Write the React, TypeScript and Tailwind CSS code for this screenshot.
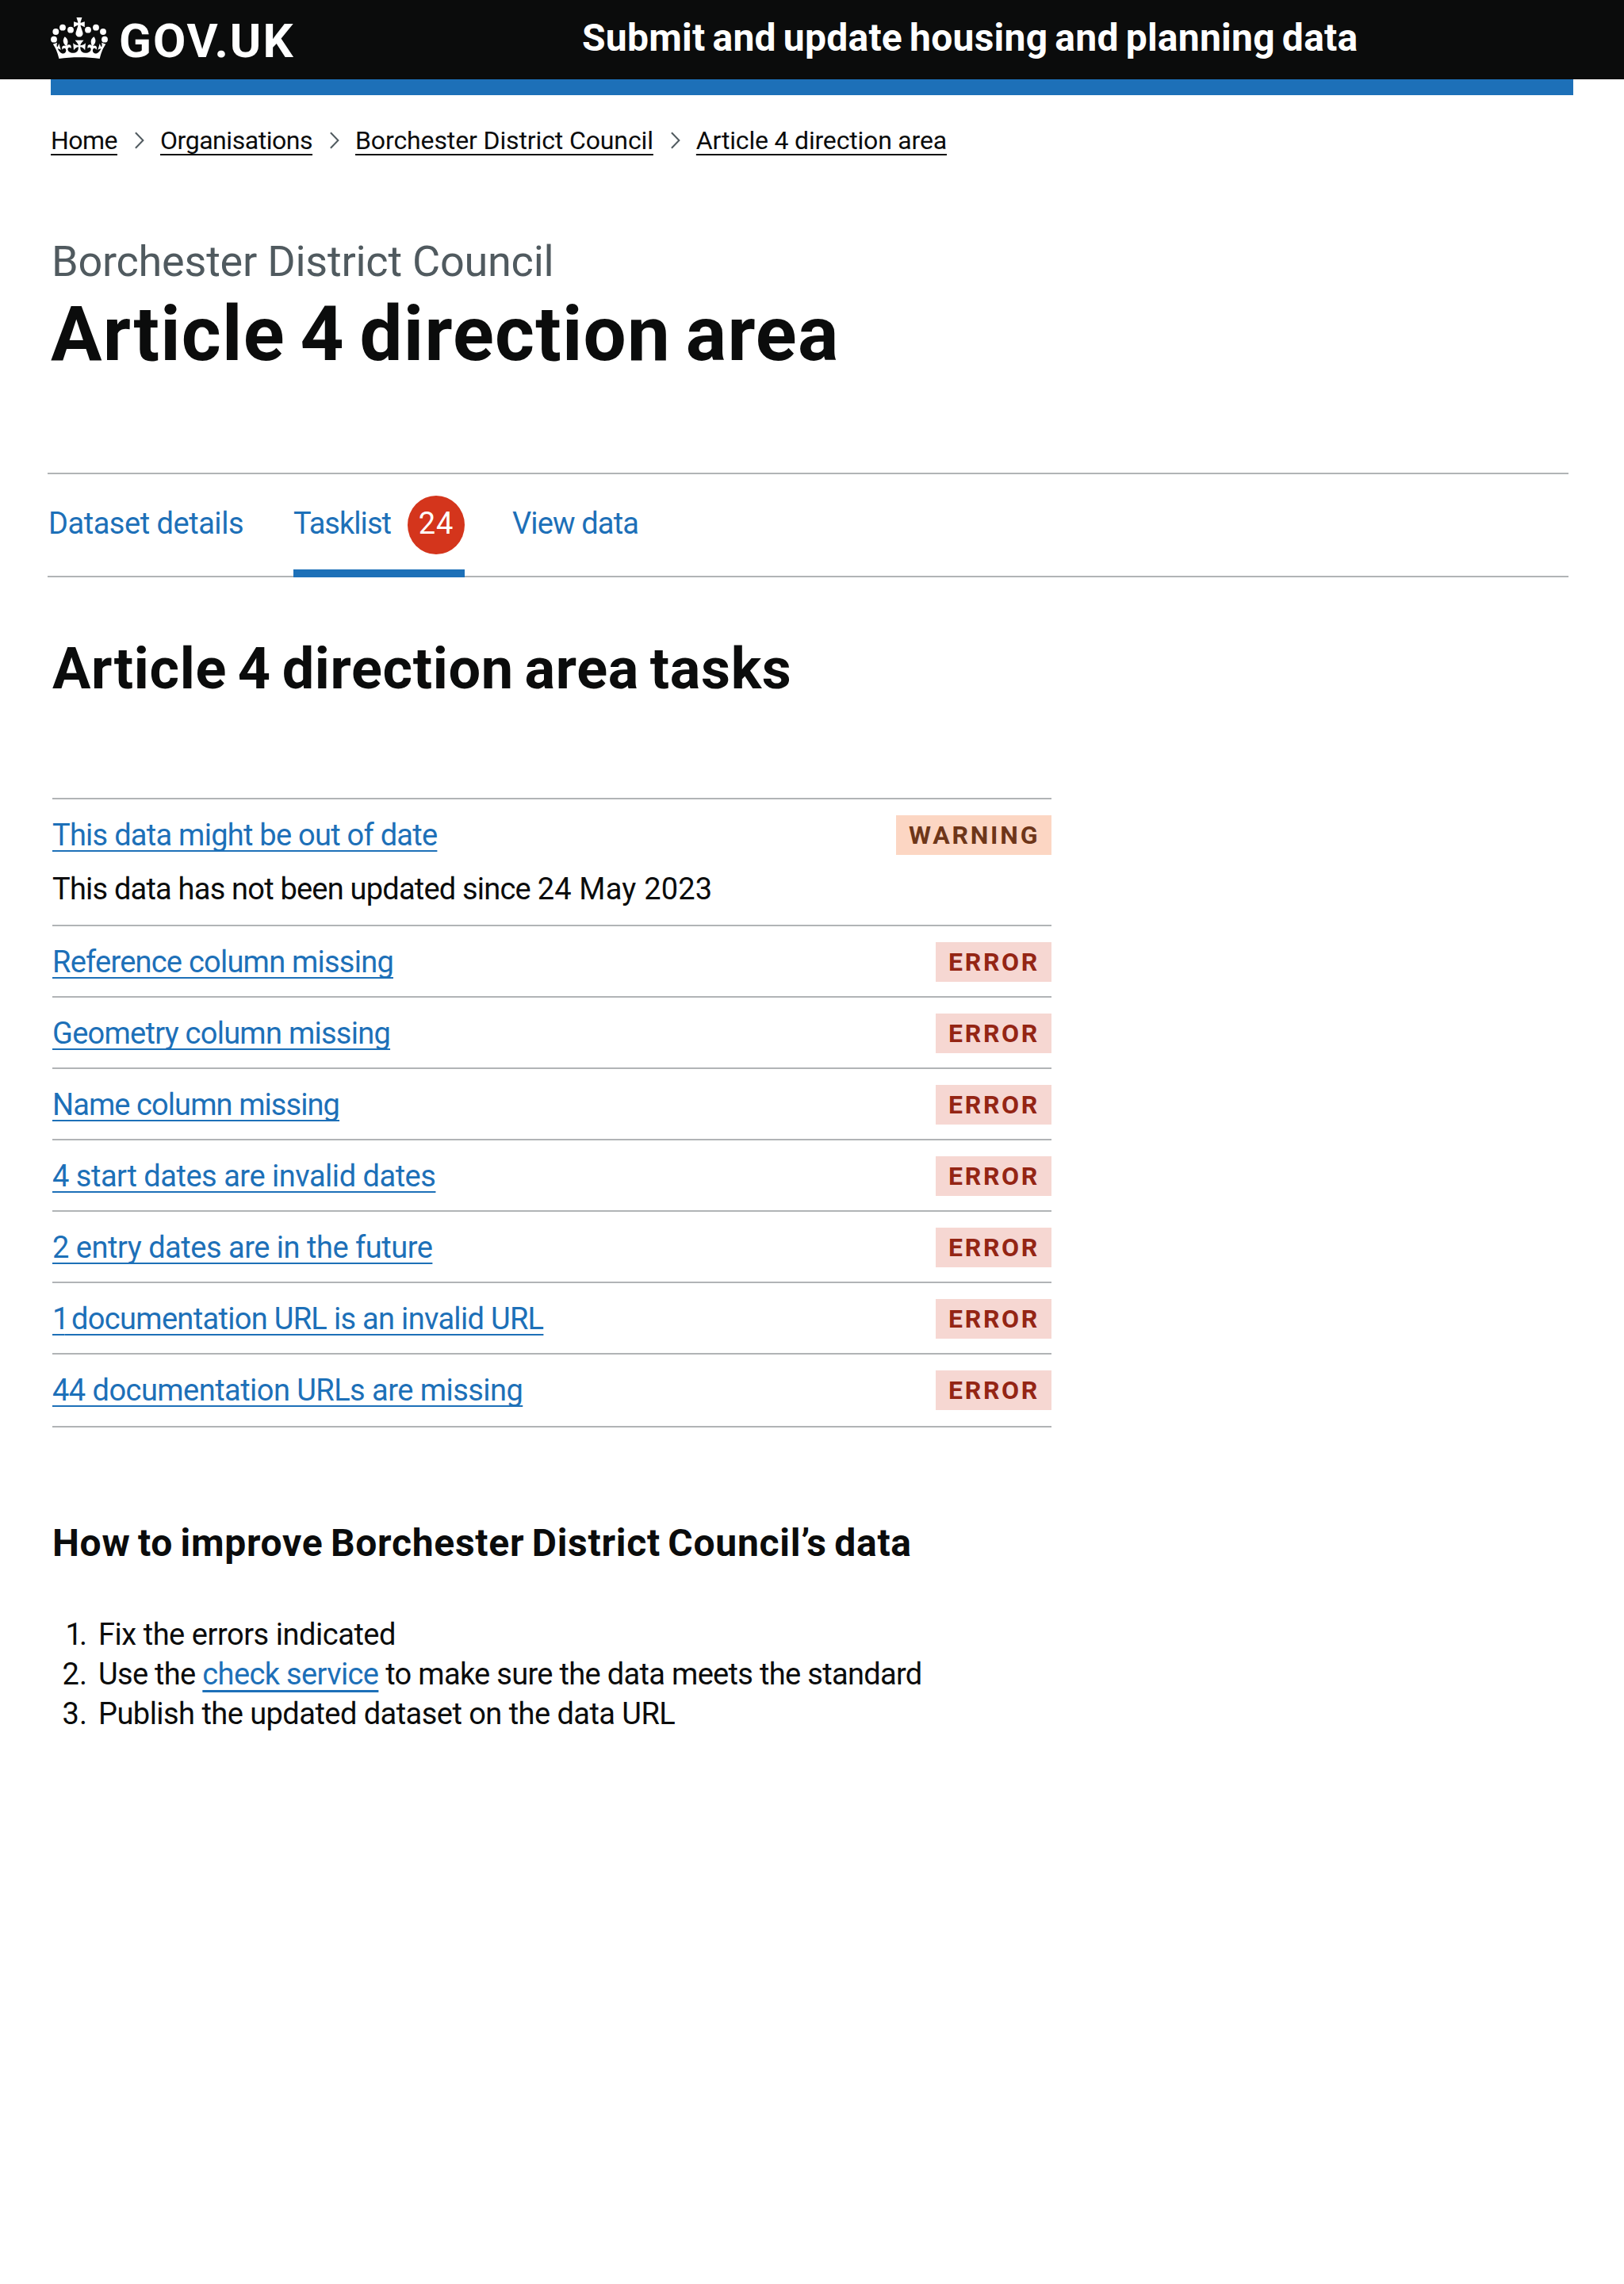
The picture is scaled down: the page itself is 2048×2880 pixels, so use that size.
import React from 'react';

const LINK = 'text-[#1d70b8] underline decoration-2 underline-offset-[6px] [text-decoration-skip-ink:none]';

function Crown() {
  return (
    <svg viewBox="72 66 216 156" className="h-[52px] w-[72px]" fill="currentColor" aria-hidden="true">
      <circle cx="84" cy="149" r="11.8" />
      <circle cx="91" cy="120" r="11.8" />
      <circle cx="117" cy="104" r="11.8" />
      <circle cx="147" cy="113" r="11.8" />
      <circle cx="213" cy="113" r="11.8" />
      <circle cx="243" cy="104" r="11.8" />
      <circle cx="270" cy="120" r="11.8" />
      <circle cx="276" cy="149" r="11.8" />
      <path
        transform="translate(80.4 66) scale(3.14)"
        d="M33.1,9.8c.2-.1.3-.3.5-.5l4.6,2.4v-6.8l-4.6,1.5c-.1-.2-.3-.3-.5-.5l1.9-5.9h-6.7l1.9,5.9c-.2.1-.3.3-.5.5l-4.6-1.5v6.8l4.6-2.4c.1.2.3.3.5.5l-2.6,8c-.9,2.8,1.2,5.7,4.1,5.7h0c3,0,5.1-2.9,4.1-5.7l-2.6-8Z"
      />
      <path
        transform="translate(80.4 33.6) scale(3.14)"
        d="M37,37.9s-3.4,3.8-4.1,6.1c2.2,0,4.2-.5,6.4-2.8l-.7,8.5c-2-2.8-4.4-4.1-5.7-3.8.1,3.1.5,6.7,5.8,7.2,3.7.3,6.7-1.5,7-3.8.4-2.6-2-4.3-3.7-1.6-1.4-4.5,2.4-6.1,4.9-3.2-1.9-4.5-1.8-7.7,2.4-10.9,3,4,2.6,7.3-1.2,11.1,2.4-1.3,6.2,0,4,4.6-1.2-2.8-3.7-2.2-4.2.2-.3,1.7.7,3.7,3,4.2,1.9.3,4.7-.9,7-5.9-1.3,0-2.4.7-3.9,1.7l2.4-8c.6,2.3,1.4,3.7,2.2,4.5.6-1.6.5-2.8,0-5.3l5,1.8c-2.6,3.6-5.2,8.7-7.3,17.5-7.4-1.1-15.7-1.7-24.5-1.7h0c-8.8,0-17.1.6-24.5,1.7-2.1-8.9-4.7-13.9-7.3-17.5l5-1.8c-.5,2.5-.6,3.7,0,5.3.8-.8,1.6-2.3,2.2-4.5l2.4,8c-1.5-1-2.6-1.7-3.9-1.7,2.3,5,5.2,6.2,7,5.9,2.3-.4,3.3-2.4,3-4.2-.5-2.4-3-3.1-4.2-.2-2.2-4.6,1.6-6,4-4.6-3.7-3.7-4.2-7.1-1.2-11.1,4.2,3.2,4.3,6.4,2.4,10.9,2.5-2.8,6.3-1.3,4.9,3.2-1.8-2.7-4.1-1-3.7,1.6.3,2.3,3.3,4.1,7,3.8,5.4-.5,5.7-4.2,5.8-7.2-1.3-.2-3.7,1-5.7,3.8l-.7-8.5c2.2,2.3,4.2,2.7,6.4,2.8-.7-2.3-4.1-6.1-4.1-6.1h10.6Z"
      />
    </svg>
  );
}

function Chevron() {
  return (
    <svg viewBox="0 0 12 22" className="mt-[9px] mr-5 ml-[22px] h-[22px] w-3" fill="none" stroke="#505a5f" strokeWidth="2" aria-hidden="true">
      <path d="M0.9 1.2 10.4 11 0.9 20.8" />
    </svg>
  );
}

const CRUMBS = [
  { label: 'Home', tracking: 'tracking-[-0.53px]' },
  { label: 'Organisations', tracking: 'tracking-[-0.46px]' },
  { label: 'Borchester District Council', tracking: 'tracking-[-0.12px]' },
  { label: 'Article 4 direction area', tracking: 'tracking-[-0.19px]' },
];

interface Task {
  label: React.ReactNode;
  tracking: string;
  hint?: React.ReactNode;
  status: string;
}

const TASKS: Task[] = [
  {
    label: 'This data might be out of date',
    tracking: 'tracking-[-0.74px]',
    hint: (
      <>
        <span className="tracking-[-0.79px]">This data has not been updated since </span>
        <span className="tracking-[0.2px]">24 May 2023</span>
      </>
    ),
    status: 'WARNING',
  },
  { label: 'Reference column missing', tracking: 'tracking-[-0.77px]', status: 'ERROR' },
  { label: 'Geometry column missing', tracking: 'tracking-[-0.74px]', status: 'ERROR' },
  { label: 'Name column missing', tracking: 'tracking-[-0.92px]', status: 'ERROR' },
  { label: '4 start dates are invalid dates', tracking: 'tracking-[-0.48px]', status: 'ERROR' },
  { label: '2 entry dates are in the future', tracking: 'tracking-[-0.48px]', status: 'ERROR' },
  {
    label: (
      <>
        <span className="tracking-[-6px]">1</span> documentation URL is an invalid URL
      </>
    ),
    tracking: 'tracking-[-0.69px]',
    status: 'ERROR',
  },
  { label: '44 documentation URLs are missing', tracking: 'tracking-[-0.54px]', status: 'ERROR' },
];

function Tag({ status }: { status: string }) {
  return status === 'WARNING' ? (
    <strong className="h-[50px] w-[196px] shrink-0 bg-[#fcd6c3] pl-4 text-[32px] leading-[50px] font-bold tracking-[2.8px] text-[#6e3619]">
      {status}
    </strong>
  ) : (
    <strong className="h-[50px] w-[146px] shrink-0 bg-[#f6d7d2] pl-4 text-[32px] leading-[50px] font-bold tracking-[2.7px] text-[#942514]">
      {status}
    </strong>
  );
}

export default function App() {
  return (
    <div className="min-h-[2880px] bg-white font-[Roboto,Arial,sans-serif] text-[#0b0c0c]">
      <header className="flex h-[100px] bg-[#0b0c0c] pl-16 text-white">
        <a className="flex w-[670px]">
          <span className="pt-[22px]">
            <Crown />
          </span>
          <span className="pt-[22px] pl-[14px] text-[60px] leading-[60px] font-bold tracking-[2px]">GOV.UK</span>
        </a>
        <span className="pt-[23px] text-[48px] leading-[50px] font-bold tracking-[0.25px] [word-spacing:-3.2px]">
          Submit and update housing and planning data
        </span>
      </header>
      <div className="mx-16 h-5 bg-[#1d70b8]" />

      <nav className="flex pt-[37px] pl-16 text-[32px] leading-10">
        {CRUMBS.map((c, i) => (
          <React.Fragment key={c.label}>
            {i > 0 && <Chevron />}
            <a className={`underline decoration-2 underline-offset-[6px] [text-decoration-skip-ink:none] ${c.tracking}`}>
              {c.label}
            </a>
          </React.Fragment>
        ))}
      </nav>

      <main>
        <p className="mt-[103px] pl-[65px] text-[54px] leading-[60px] tracking-[-0.23px] text-[#505a5f]">
          Borchester District Council
        </p>
        <h1 className="mt-[11px] pl-16 text-[96px] leading-[100px] font-bold tracking-[1.22px] [word-spacing:-6.3px]">
          Article 4 direction area
        </h1>

        <nav className="mt-[125px] ml-[60px] flex h-[132px] w-[1918px] border-y-2 border-[#b1b4b6] text-[38px] leading-10 text-[#1d70b8]">
          <a className="w-[310px] pt-[42px] pl-px tracking-[-0.47px]">Dataset details</a>
          <a className="flex h-[130px] w-[216px] justify-between border-b-[10px] border-[#1d70b8]">
            <span className="pt-[42px] tracking-[-0.95px]">Tasklist</span>
            <span className="mt-[27px] h-[74px] w-[72px] rounded-[50%] bg-[#d4351c] pt-[15px] text-center tracking-[1px] text-white">
              24
            </span>
          </a>
          <a className="ml-[60px] pt-[42px] tracking-[-0.86px]">View data</a>
        </nav>

        <h2 className="mt-[76px] pl-[66px] text-[72px] leading-[80px] font-bold tracking-[0.67px] [word-spacing:-4.75px]">
          Article 4 direction area tasks
        </h2>

        <ul className="mt-[122px] ml-[66px] w-[1260px] border-b-2 border-[#b1b4b6] pb-0.5 text-[38px] leading-[50px]">
          {TASKS.map((t, i) => (
            <li key={i} className="flex justify-between border-t-2 border-[#b1b4b6] pt-5 pb-[18px]">
              <div className={t.hint ? 'pb-0.5' : ''}>
                <a className={`${LINK} ${t.tracking}`}>{t.label}</a>
                {t.hint && <p className="mt-[18px]">{t.hint}</p>}
              </div>
              <Tag status={t.status} />
            </li>
          ))}
        </ul>

        <h3 className="mt-[121px] pl-[66px] text-[48px] leading-[50px] font-bold tracking-[0.73px] [word-spacing:-3.2px]">
          How to improve Borchester District Council’s data
        </h3>

        <ol className="mt-[65px] ml-[66px] text-[38px] leading-[50px]">
          <li className="flex">
            <span className="mr-3.5 w-11 text-right">
              <span className="tracking-[-4px]">1</span>.
            </span>
            <span className="tracking-[-0.46px]">Fix the errors indicated</span>
          </li>
          <li className="flex">
            <span className="mr-3.5 w-11 text-right">2.</span>
            <span className="tracking-[-0.68px]">
              Use the{' '}
              <a className="text-[#1d70b8] underline decoration-3 underline-offset-[7px] tracking-[-0.63px] [text-decoration-skip-ink:none]">
                check service
              </a>{' '}
              to make sure the data meets the standard
            </span>
          </li>
          <li className="flex">
            <span className="mr-3.5 w-11 text-right">3.</span>
            <span className="tracking-[-0.54px]">Publish the updated dataset on the data URL</span>
          </li>
        </ol>
      </main>
    </div>
  );
}
